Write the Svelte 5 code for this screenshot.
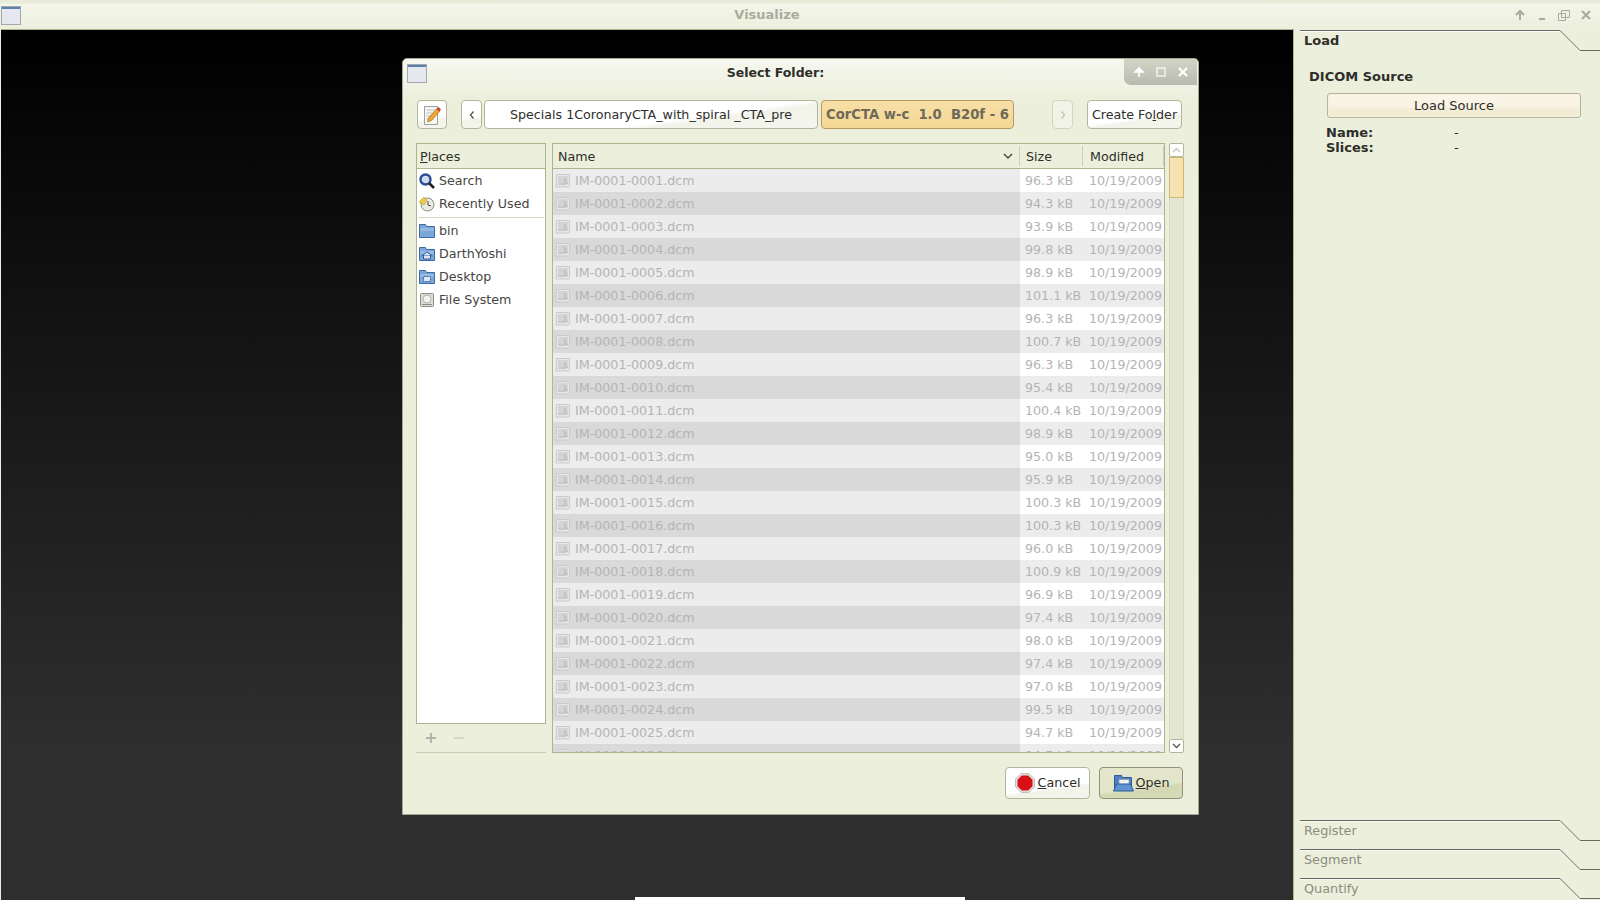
<script>
  const sizes = ['96.3','94.3','93.9','99.8','98.9','101.1','96.3','100.7','96.3','95.4','100.4','98.9','95.0','95.9','100.3','100.3','96.0','100.9','96.9','97.4','98.0','97.4','97.0','99.5','94.7','94.7'];
  const files = sizes.map((s, i) => ({
    name: 'IM-0001-' + String(i + 1).padStart(4, '0') + '.dcm',
    size: s + ' kB',
    date: '10/19/2009'
  }));
  const tabs = ['Register', 'Segment', 'Quantify'];
</script>

{#snippet winIcon()}
  <svg class="winicon" width="20" height="19" viewBox="0 0 20 19">
    <rect x="0.5" y="0.5" width="19" height="18" fill="#e6e8ef" stroke="#a4a8ae"/>
    <rect x="1" y="1" width="18" height="2" fill="#5b7fae"/>
  </svg>
{/snippet}

{#snippet tabLine()}
  <svg class="tabline" width="300" height="22" viewBox="0 0 300 22">
    <path d="M0 1.500H260L280 21.500" fill="none" stroke="#fff" stroke-opacity=".7"/>
    <path d="M0 .5H260L280 20.500H300" fill="none" stroke="#686a62"/>
  </svg>
{/snippet}

{#snippet fileIcon()}
  <svg class="fileicon" width="17" height="16" viewBox="0 0 17 16">
    <path d="M1.500 1.500h13v10.500l-1 2h-12.500z" fill="#e6e6e6" stroke="#cacaca"/>
    <rect x="3" y="3" width="10" height="7" fill="#d4d4d4"/>
    <path d="M3 11h8l2-1M9 5l2 3-2 2" fill="none" stroke="#aeaeae"/>
    <path d="M14 11l2 0-2 3z" fill="#d8d8d8"/>
  </svg>
{/snippet}

{#snippet blueFolder()}
  <path d="M.5 14.500v-13h6l1 2h8v11z" fill="#7ba6d8" stroke="#3b6aa6"/>
  <path d="M1 5h14v3H1z" fill="#94b8e2"/>
{/snippet}

<div class="screen">
  <header class="titlebar">
    {@render winIcon()}
    <span class="apptitle">Visualize</span>
    <div class="wmbtns">
      <svg width="14" height="14" viewBox="0 0 14 14"><path d="M7 12V4M3 7l4-4 4 4" fill="none" stroke="#a9ab9f" stroke-width="2"/></svg>
      <svg width="14" height="14" viewBox="0 0 14 14"><path d="M4 11h6" stroke="#a9ab9f" stroke-width="2"/></svg>
      <svg width="14" height="14" viewBox="0 0 14 14"><path d="M4.500 2.500h8v7h-8zM1.500 5.500h7v7h-7z" fill="#eef0e1" stroke="#a9ab9f"/></svg>
      <svg width="14" height="14" viewBox="0 0 14 14"><path d="M3 3l8 8M11 3l-8 8" stroke="#a9ab9f" stroke-width="2"/></svg>
    </div>
  </header>

  <div class="workspace">
    <main class="canvas"><div class="canvasbar"></div></main>
    <aside class="side">
      <section class="openpane">
        <div class="tab">
          {@render tabLine()}
          <span class="tablabel active">Load</span>
        </div>
        <h3>DICOM Source</h3>
        <button class="loadbtn">Load Source</button>
        <dl>
          <dt>Name:</dt><dd>-</dd>
          <dt>Slices:</dt><dd>-</dd>
        </dl>
      </section>
      <section class="closedtabs">
        {#each tabs as t}
          <div class="tab closed">
            {@render tabLine()}
            <span class="tablabel">{t}</span>
          </div>
        {/each}
      </section>
    </aside>
  </div>

  <div class="dialog">
    <div class="dlgtitle">
      {@render winIcon()}
      <span>Select Folder:</span>
      <div class="dlgwm">
        <svg width="14" height="14" viewBox="0 0 14 14"><path d="M7 12V6M3 7l4-4 4 4z" fill="#fff" stroke="#fff" stroke-width="1.600"/></svg>
        <svg width="12" height="12" viewBox="0 0 12 12"><rect x="2" y="2" width="8" height="8" fill="none" stroke="#f0f0e8" stroke-width="1.600"/></svg>
        <svg width="14" height="14" viewBox="0 0 14 14"><path d="M3 3l8 8M11 3l-8 8" stroke="#fff" stroke-width="2.200"/></svg>
      </div>
    </div>

    <div class="pathbar">
      <button class="gbtn editbtn" aria-label="edit">
        <svg width="20" height="22" viewBox="0 0 20 22">
          <path d="M2.500 2.500h13v18h-13z" fill="#f6f6f2" stroke="#a0a098"/>
          <path d="M4.500 6h8M4.500 9h6M4.500 12h5M4.500 15h3" stroke="#c0c0b8"/>
          <path d="M5.500 18l1-4 8-9 3 2.500-8 9z" fill="#f0a732" stroke="#a9701c" stroke-width=".7"/>
          <path d="M14.500 5l2-2 2.500 2.500-1.500 2z" fill="#cc3a3a"/>
        </svg>
      </button>
      <button class="gbtn arrowbtn" aria-label="back">
        <svg width="8" height="10" viewBox="0 0 8 10"><path d="M5.500 1.500L2.500 5l3 3.500" fill="none" stroke="#55564e" stroke-width="1.300"/></svg>
      </button>
      <button class="gbtn crumb">Specials 1CoronaryCTA_with_spiral _CTA_pre</button>
      <button class="gbtn current">CorCTA w-c&nbsp; 1.0&nbsp; B20f - 6</button>
      <button class="gbtn arrowbtn next" aria-label="next">
        <svg width="8" height="10" viewBox="0 0 8 10"><path d="M2.500 1.500L5.500 5l-3 3.500" fill="none" stroke="#c4c6b4" stroke-width="1.300"/></svg>
      </button>
      <button class="gbtn createbtn"><span>Create Fo<u>l</u>der</span></button>
    </div>

    <div class="browser">
      <div class="placescol">
        <div class="places">
          <div class="thead placeshead"><span><u>P</u>laces</span></div>
          <div class="placerow">
            <svg width="16" height="16" viewBox="0 0 16 16"><circle cx="6.500" cy="6.500" r="5" fill="#cfdcf2" stroke="#2e4a96" stroke-width="2.400"/><path d="M10 10l5 5" stroke="#222" stroke-width="2.600"/></svg>
            Search
          </div>
          <div class="placerow">
            <svg width="16" height="16" viewBox="0 0 16 16"><circle cx="8.500" cy="8.500" r="6.500" fill="#ecebe2" stroke="#8c8c80"/><path d="M0 6l5-5 3 3-3 5z" fill="#ecc94e" stroke="#ad8f24" stroke-width=".5"/><path d="M9 5v4l3 1" fill="none" stroke="#444"/></svg>
            Recently Used
          </div>
          <div class="placesep"></div>
          <div class="placerow bookmark">
            <svg width="16" height="16" viewBox="0 0 16 16">{@render blueFolder()}</svg>
            bin
          </div>
          <div class="placerow">
            <svg width="16" height="16" viewBox="0 0 16 16">{@render blueFolder()}<path d="M2.500 10l5.500-4 5.500 4M4.500 9v4h7V9" fill="#dbe7f5" stroke="#2f5c96"/></svg>
            DarthYoshi
          </div>
          <div class="placerow">
            <svg width="16" height="16" viewBox="0 0 16 16">{@render blueFolder()}<rect x="4.500" y="7.500" width="7" height="5" fill="#dbe7f5" stroke="#2f5c96" stroke-dasharray="2 1"/></svg>
            Desktop
          </div>
          <div class="placerow">
            <svg width="16" height="16" viewBox="0 0 16 16"><rect x="1.500" y="1.500" width="13" height="13" rx="1" fill="#dcdcd6" stroke="#8e8e86"/><circle cx="8" cy="7" r="4" fill="#f2f2ee" stroke="#b4b4ac"/><path d="M3 12.500h10" stroke="#8e8e86"/></svg>
            File System
          </div>
        </div>
        <div class="addbar">
          <svg width="14" height="14" viewBox="0 0 14 14"><path d="M7 2v10M2 7h10" stroke="#b4b4ae" stroke-width="2"/></svg>
          <svg width="14" height="14" viewBox="0 0 14 14"><path d="M2 7h10" stroke="#d4d6c6" stroke-width="2"/></svg>
        </div>
      </div>

      <div class="filelist">
        <div class="thead cols">
          <div class="cname">Name
            <svg width="10" height="7" viewBox="0 0 10 7"><path d="M1 1l4 4 4-4" fill="none" stroke="#4a4a44" stroke-width="1.500"/></svg>
          </div>
          <div class="csize">Size</div>
          <div class="cdate">Modified</div>
        </div>
        <div class="rows">
          {#each files as f, i}
            <div class="row" class:odd={i % 2 === 1}>
              <div class="rname">{@render fileIcon()}{f.name}</div>
              <div class="rsize">{f.size}</div>
              <div class="rdate">{f.date}</div>
            </div>
          {/each}
        </div>
      </div>

      <div class="scrollbar">
        <div class="sbtn"><svg width="9" height="6" viewBox="0 0 9 6"><path d="M1 5l3.500-3.500L8 5" fill="none" stroke="#c4c6b4" stroke-width="1.300"/></svg></div>
        <div class="thumb"></div>
        <div class="track"></div>
        <div class="sbtn"><svg width="9" height="6" viewBox="0 0 9 6"><path d="M1 1l3.500 3.500L8 1" fill="none" stroke="#55564e" stroke-width="1.300"/></svg></div>
      </div>
    </div>

    <div class="actions">
      <button class="gbtn actbtn cancel">
        <svg width="20" height="20" viewBox="0 0 20 20">
          <path d="M6 .7h8L19.300 6v8L14 19.300H6L.7 14V6z" fill="#e4e4e0" stroke="#b4b4ae"/>
          <path d="M6.800 2.500h6.400l4.300 4.300v6.400l-4.300 4.300H6.800l-4.300-4.300V6.800z" fill="#d80f15"/>
        </svg>
        <span><u>C</u>ancel</span>
      </button>
      <button class="gbtn actbtn open">
        <svg width="21" height="18" viewBox="0 0 21 18"><path d="M1.500 14V1.500h7l1 2h9V14z" fill="#4f82c4" stroke="#2c5a9a"/><rect x="6" y="5.500" width="10" height="6" fill="#eef1f5" stroke="#8d97a5" stroke-width=".7"/><path d="M3.500 10h14l3 7H.5z" fill="#5f93d2" stroke="#2c5a9a"/></svg>
        <span><u>O</u>pen</span>
      </button>
    </div>
  </div>
</div>

<style>
  :global(body) {
    margin: 0;
    background: #ecefdc;
  }
  .screen {
    position: relative;
    width: 1600px;
    height: 900px;
    overflow: hidden;
    display: flex;
    flex-direction: column;
    font-family: "DejaVu Sans", sans-serif;
    font-size: 13px;
    color: #2e2e2a;
  }
  button {
    font: inherit;
    color: inherit;
    padding: 0;
  }
  .titlebar {
    height: 29px;
    box-sizing: border-box;
    flex: none;
    display: flex;
    align-items: center;
    position: relative;
    padding: 0 7px 0 1px;
    background: linear-gradient(#e8ebd9 0, #e8ebd9 3px, #f4f5ea 4px, #ecefdc 100%);
  }
  .apptitle {
    position: absolute;
    left: 0;
    right: 66px;
    text-align: center;
    font-weight: bold;
    color: #aaac9e;
  }
  .wmbtns {
    margin: 1px 0 0 auto;
    display: flex;
    gap: 8px;
  }
  .winicon {
    margin-top: 1px;
  }
  .workspace {
    flex: 1;
    display: flex;
    min-height: 0;
  }
  .canvas {
    width: 1292px;
    margin-left: 1px;
    border-top: 1px solid #b0b48e;
    border-right: 1px solid #b0b48e;
    background: linear-gradient(#000 0, #0a0a0a 18%, #2e2e2e 82%, #2e2e2e 100%);
    position: relative;
  }
  .canvasbar {
    position: absolute;
    left: 634px;
    width: 330px;
    bottom: 0;
    height: 3px;
    background: #fff;
  }
  .side {
    flex: 1;
    display: flex;
    flex-direction: column;
    padding: 1px 0 0 6px;
  }
  .openpane {
    flex: 1;
  }
  .tab {
    position: relative;
    height: 29px;
  }
  .tabline {
    position: absolute;
    left: 0;
    top: 0;
    display: block;
  }
  .tablabel {
    position: absolute;
    left: 4px;
    top: 3px;
    color: #8b8d80;
    font-size: 12.800px;
  }
  .tablabel.active {
    font-size: 13px;
    font-weight: bold;
    color: #2e2e2a;
  }
  h3 {
    margin: 10px 0 0 9px;
    font-size: 13px;
    font-weight: bold;
    line-height: 16px;
  }
  .loadbtn {
    display: block;
    width: 254px;
    height: 25px;
    margin: 8px 0 0 27px;
    border: 1px solid #b4b69c;
    border-radius: 3px;
    background: linear-gradient(#fbf5e8 0, #f9f3e4 55%, #f2ecd8 65%, #f3ecd2 100%);
    box-shadow: inset 0 0 0 1px #f6efd9;
  }
  dl {
    margin: 7px 0 0 26px;
    display: grid;
    grid-template-columns: 128px 1fr;
    line-height: 15px;
    font-weight: bold;
  }
  dt, dd {
    margin: 0;
  }
  dd {
    font-weight: normal;
  }
  .closedtabs {
    margin-bottom: -7px;
  }
  .dialog {
    position: absolute;
    left: 402px;
    top: 58px;
    width: 797px;
    height: 757px;
    box-sizing: border-box;
    border: 1px solid #a5a890;
    border-radius: 5px 5px 0 0;
    background: #ecefdc;
    padding: 0 14px 0 13px;
    display: flex;
    flex-direction: column;
    font-size: 12.670px;
  }
  .dlgtitle {
    position: relative;
    height: 41px;
    box-sizing: border-box;
    flex: none;
    background: linear-gradient(#f6f7ef, #ecefdc);
    margin: 0 -14px 0 -13px;
    padding: 4px 0 0 4px;
    display: flex;
    align-items: flex-start;
    border-radius: 5px 5px 0 0;
    font-weight: bold;
  }
  .dlgtitle > span {
    position: absolute;
    left: 0;
    right: 50px;
    top: 6px;
    line-height: 16px;
    text-align: center;
    font-size: 12.500px;
  }
  .dlgwm {
    position: absolute;
    right: 1px;
    top: 0;
    width: 73px;
    height: 26px;
    box-sizing: border-box;
    background: linear-gradient(#d3d5c8, #b8bab0);
    border-radius: 0 0 0 7px;
    display: flex;
    align-items: center;
    justify-content: space-around;
    padding: 0 3px;
  }
  .pathbar {
    flex: none;
    display: flex;
    height: 29px;
  }
  .gbtn {
    box-sizing: border-box;
    height: 100%;
    border: 1px solid #b4b69c;
    border-radius: 4px;
    background: linear-gradient(172deg, #fff 0, #fff 62%, #f2f3e9 68%, #f4f5ec 100%);
    white-space: nowrap;
    display: flex;
    align-items: center;
    justify-content: center;
  }
  .editbtn {
    width: 30px;
    margin-left: 1px;
  }
  .arrowbtn {
    width: 21px;
    margin-left: 14px;
  }
  .crumb {
    width: 334px;
    margin-left: 2px;
  }
  .current {
    width: 193px;
    margin-left: 3px;
    font-weight: bold;
    font-size: 13.200px;
    color: #6e6a58;
    border-color: #b59b62;
    background: linear-gradient(#f8dfa8, #f5d793);
  }
  .next {
    margin-left: 38px;
    background: #f1f3e6;
    border-color: #d3d6bf;
  }
  .createbtn {
    width: 95px;
    margin-left: 14px;
  }
  .browser {
    flex: none;
    height: 610px;
    margin-top: 14px;
    display: flex;
  }
  .placescol {
    width: 130px;
    display: flex;
    flex-direction: column;
  }
  .places {
    flex: none;
    height: 581px;
    box-sizing: border-box;
    border: 1px solid #b0b48e;
    background: #fff;
  }
  .thead {
    height: 25px;
    box-sizing: border-box;
    background: #ecefdc;
    border-bottom: 1px solid #b0b48e;
    display: flex;
    align-items: center;
  }
  .placeshead {
    padding-left: 3px;
  }
  .placerow {
    height: 23px;
    display: flex;
    align-items: center;
    gap: 4px;
    padding-left: 2px;
    color: #45453f;
  }
  .placesep {
    height: 1px;
    margin: 2px 1px 1px 1px;
    background: #d4d7bd;
  }
  .addbar {
    flex: 1;
    display: flex;
    align-items: center;
    gap: 14px;
    padding-left: 8px;
    border-bottom: 1px solid #c8cbae;
    height: 29px;
  }
  .filelist {
    width: 613px;
    margin-left: 6px;
    box-sizing: border-box;
    border: 1px solid #b0b48e;
    overflow: hidden;
    display: flex;
    flex-direction: column;
  }
  .cols {
    flex: none;
  }
  .cols > div {
    height: 20px;
    display: flex;
    align-items: center;
    padding-left: 5px;
    box-sizing: border-box;
    border-right: 1px solid #cdd0b6;
  }
  .cname {
    width: 467px;
    justify-content: space-between;
    padding-right: 6px;
  }
  .csize {
    width: 63px;
    padding-left: 6px !important;
  }
  .cdate {
    width: 81px;
    padding-left: 7px !important;
  }
  .rows {
    flex: 1;
    overflow: hidden;
    color: #b4b4b4;
  }
  .row {
    height: 23px;
    display: flex;
    align-items: center;
    background: #fff;
  }
  .row.odd {
    background: #ececec;
  }
  .rname {
    width: 467px;
    height: 100%;
    display: flex;
    align-items: center;
    gap: 3px;
    padding-left: 2px;
    box-sizing: border-box;
    background: #ececec;
  }
  .row.odd .rname {
    background: #d9d9d9;
  }
  .rsize {
    width: 63px;
    padding-left: 5px;
    box-sizing: border-box;
  }
  .rdate {
    width: 81px;
    padding-left: 6px;
    box-sizing: border-box;
  }
  .scrollbar {
    width: 15px;
    margin-left: 4px;
    display: flex;
    flex-direction: column;
  }
  .sbtn {
    height: 14px;
    flex: none;
    box-sizing: border-box;
    border: 1px solid #b4b69c;
    border-radius: 2px;
    background: #fff;
    display: flex;
    align-items: center;
    justify-content: center;
  }
  .thumb {
    height: 41px;
    flex: none;
    box-sizing: border-box;
    border: 1px solid #d0b678;
    background: linear-gradient(90deg, #f6e4b8, #f8dfa8);
  }
  .track {
    flex: 1;
    background: #e3e6d0;
    border: 1px solid #d6d9c2;
    border-width: 0 1px;
  }
  .actions {
    flex: none;
    height: 32px;
    margin-top: 14px;
    display: flex;
    justify-content: flex-end;
    gap: 9px;
    padding-right: 1px;
  }
  .actbtn {
    width: 84px;
    gap: 3px;
    padding-bottom: 2px;
  }
  .actbtn svg {
    margin-top: 1px;
  }
  .actbtn.cancel {
    width: 85px;
  }
  .actbtn.open {
    gap: 2px;
    background: linear-gradient(172deg, #e4e7cc, #e2e5c8 60%, #d3d8b2 68%, #d6dab8);
    border-color: #8f9274;
  }
</style>
